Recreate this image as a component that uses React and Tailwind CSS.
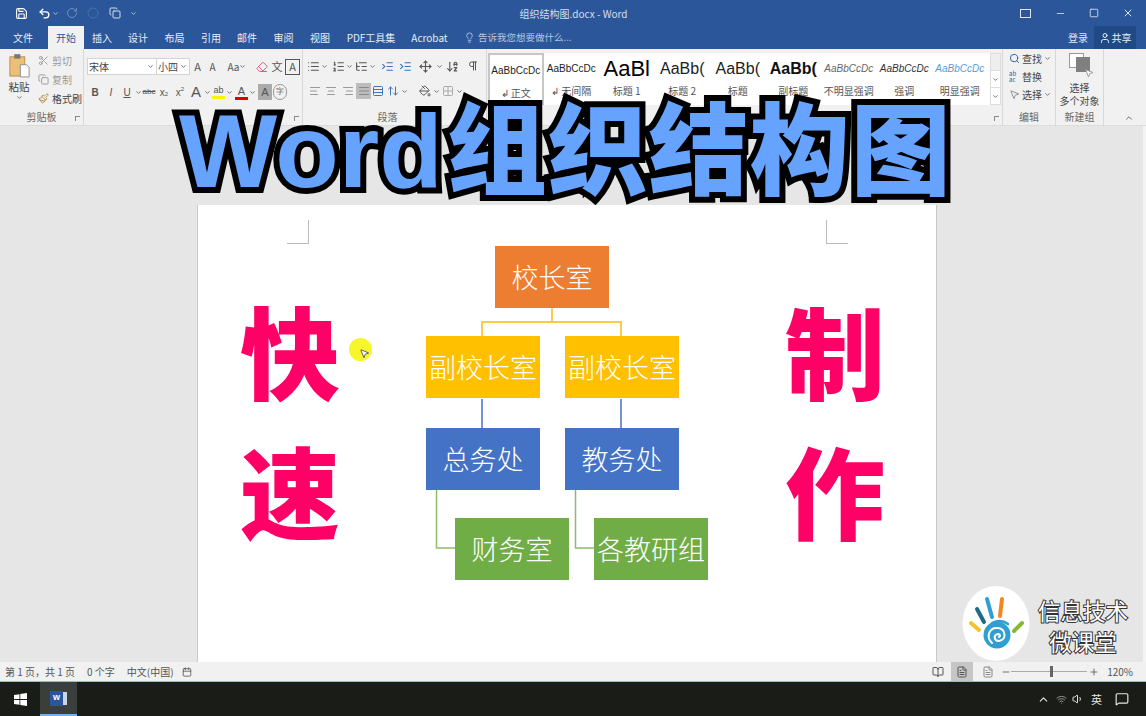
import {
  Save, Undo2, RotateCw, Circle, ChevronDown, ChevronUp, Minus, Square, X, User, Lightbulb, Search, MousePointer2,
  Scissors, Copy, Paintbrush, List, ListOrdered, ListTree, AlignLeft, AlignCenter, AlignRight, AlignJustify, Rows3,
  ArrowUpDown, PaintBucket, Grid2x2, ArrowDownAZ, Pilcrow, Eraser, BookOpen, FileText, Calendar, Plus, Wifi, Volume1, MessageSquare, IndentIncrease, Move,
} from 'lucide-react'

const CJK = "font-['Noto_Sans_CJK_SC','Liberation_Sans',sans-serif]"

const TABS = [
  { label: '插入', w: 'w-[36px]' },
  { label: '设计', w: 'w-[36px]' },
  { label: '布局', w: 'w-[37px]' },
  { label: '引用', w: 'w-[36px]' },
  { label: '邮件', w: 'w-[36px]' },
  { label: '审阅', w: 'w-[37px]' },
  { label: '视图', w: 'w-[36px]' },
  { label: 'PDF工具集', w: 'w-[66px]' },
  { label: 'Acrobat', w: 'w-[51px]' },
]

const STYLES = [
  { preview: 'AaBbCcDc', label: '↲ 正文', cls: 'text-[10px] text-[#222]', active: true },
  { preview: 'AaBbCcDc', label: '↲ 无间隔', cls: 'text-[10px] text-[#222]' },
  { preview: 'AaBl', label: '标题 1', cls: 'text-[22px] font-medium text-black' },
  { preview: 'AaBb(', label: '标题 2', cls: 'text-[16px] text-[#222]' },
  { preview: 'AaBb(', label: '标题', cls: 'text-[16px] text-[#222]' },
  { preview: 'AaBb(', label: '副标题', cls: 'text-[16px] font-semibold text-[#111]' },
  { preview: 'AaBbCcDc', label: '不明显强调', cls: 'text-[10px] italic text-[#666]' },
  { preview: 'AaBbCcDc', label: '强调', cls: 'text-[10px] italic text-[#333]' },
  { preview: 'AaBbCcDc', label: '明显强调', cls: 'text-[10px] italic text-[#5b9bd5]' },
]

// small fixed-width cell that centres one ribbon control
function Cell({ w = 'w-4', children, className = '' }) {
  return <div className={`${w} h-4 flex items-center justify-center shrink-0 text-[#555] ${className}`}>{children}</div>
}

function Caret() {
  return <ChevronDown size={7} strokeWidth={3} className="text-[#666] shrink-0" />
}

function Group({ w, label, labelPad = '', launcher, children, pad = '' }) {
  return (
    <div className={`${w} relative h-full shrink-0 flex flex-col border-r border-[#d8d8d8]`}>
      <div className={`flex-1 min-h-0 ${pad}`}>{children}</div>
      {label && <div className={`h-[17px] shrink-0 text-center text-[10px] leading-[17px] text-[#666] ${labelPad}`}>{label}</div>}
      {launcher && <div className="absolute right-[3px] bottom-[4px] w-[5px] h-[5px] border-t border-l border-[#888]" />}
    </div>
  )
}

function Clipboard() {
  return (
    <Group w="w-[84px]" label="剪贴板" launcher>
      <div className="flex">
        <div className="w-[38px] shrink-0 flex flex-col items-center pt-[4px]">
          <svg width="21" height="26" viewBox="0 0 24 29">
            <rect x="1" y="4" width="17" height="22" fill="#e8c078" stroke="#b58a45" />
            <rect x="6" y="1" width="7" height="5" fill="#777" />
            <path d="M13 13h7l3 3v11H13z" fill="#fff" stroke="#888" />
          </svg>
          <div className="text-[10.5px] leading-[14px] text-[#444] mt-[1px]">粘贴</div>
          <Caret />
        </div>
        <div className="flex flex-col pt-[3px] gap-[2px] text-[10px] leading-[17px] text-[#999]">
          <div className="flex items-center gap-[3px]"><Scissors size={11} />剪切</div>
          <div className="flex items-center gap-[3px]"><Copy size={11} />复制</div>
          <div className="flex items-center gap-[3px] text-[#444]"><Paintbrush size={11} className="text-[#b58a45]" />格式刷</div>
        </div>
      </div>
    </Group>
  )
}

function FontGroup() {
  return (
    <Group w="w-[219px]" label="" launcher>
      <div className="pl-[3px] pt-[9px] flex items-center">
        <div className="w-[70px] h-[17px] bg-white border border-[#d4d4d4] flex items-center justify-between pl-[1px] pr-[2px] text-[10px] text-[#444]">宋体<Caret /></div>
        <div className="w-[33px] h-[17px] bg-white border border-[#d4d4d4] border-l-0 flex items-center justify-between pl-[1px] pr-[2px] text-[10px] text-[#444]">小四<Caret /></div>
        <Cell w="w-[15px]" className="text-[11px]">A</Cell>
        <Cell w="w-[15px]" className="text-[10px]">A</Cell>
        <Cell w="w-[26px]" className="ml-[4px] text-[10px]">Aa<Caret /></Cell>
        <Cell w="w-[15px]" className="ml-[4px]"><Eraser size={12} className="text-[#d9607a]" /></Cell>
        <Cell w="w-[16px]" className="text-[11px] text-[#3a76b8]">文</Cell>
        <Cell w="w-[15px]" className="border border-[#555] text-[11px]">A</Cell>
      </div>
      <div className="pl-[3px] pt-[9px] flex items-center font-['Liberation_Sans',sans-serif]">
        <Cell className="font-bold text-[10px]">B</Cell>
        <Cell className="italic text-[10px]">I</Cell>
        <Cell className="underline text-[10px]">U</Cell>
        <Caret />
        <Cell w="w-[14px]" className="text-[8px] line-through">abc</Cell>
        <Cell className="text-[10px]">x<sub className="text-[6px]">2</sub></Cell>
        <Cell className="text-[10px]">x<sup className="text-[6px]">2</sup></Cell>
        <Cell className="text-[15px] text-[#5b9bd5]">A</Cell>
        <Caret />
        <div className="w-[15px] h-[15px] flex flex-col items-center shrink-0">
          <span className="text-[9px] leading-[11px] text-[#555]">ab</span>
          <span className="w-[13px] h-[3px] bg-[#fff200]" />
        </div>
        <Caret />
        <div className="w-[15px] h-[15px] ml-[1px] flex flex-col items-center shrink-0">
          <span className="text-[11px] leading-[12px] text-[#555]">A</span>
          <span className="w-[13px] h-[3px] bg-[#e00000]" />
        </div>
        <Caret />
        <Cell w="w-[14px]" className="ml-[2px] bg-[#aaa] text-[11px] text-[#333]">A</Cell>
        <Cell w="w-[14px]" className="ml-[1px] rounded-full border border-[#999] text-[8px]">字</Cell>
      </div>
    </Group>
  )
}

function ParagraphGroup() {
  return (
    <Group w="w-[184px]" label="段落" labelPad="pr-[14px]" launcher>
      <div className="pl-[2px] pt-[9px] flex items-center text-[#555]">
        <Cell><List size={13} /></Cell><Caret />
        <Cell className="ml-[2px]"><ListOrdered size={13} /></Cell><Caret />
        <Cell><ListTree size={13} /></Cell><Caret />
        <Cell w="w-[18px]" className="ml-[2px]"><IndentIncrease size={13} className="text-[#3a76b8]" /></Cell>
        <Cell w="w-[18px]"><IndentIncrease size={13} className="text-[#3a76b8]" /></Cell>
        <Cell w="w-[22px]"><Move size={13} /></Cell><Caret />
        <Cell w="w-[18px]"><ArrowDownAZ size={13} /></Cell>
        <Cell w="w-[18px]" className="ml-[3px]"><Pilcrow size={12} /></Cell>
      </div>
      <div className="pl-[3px] pt-[9px] flex items-center">
        <Cell w="w-[17px]"><AlignLeft size={12} className="text-[#999]" /></Cell>
        <Cell w="w-[16px]"><AlignCenter size={12} className="text-[#999]" /></Cell>
        <Cell w="w-[17px]"><AlignRight size={12} className="text-[#999]" /></Cell>
        <Cell w="w-[15px]" className="bg-[#bdbdbd]"><AlignJustify size={12} className="text-[#888]" /></Cell>
        <Cell w="w-[14px]"><Rows3 size={12} className="text-[#3a76b8]" /></Cell>
        <Cell w="w-[16px]"><ArrowUpDown size={12} className="text-[#3a76b8]" /></Cell><Caret />
        <div className="w-[9px] shrink-0" />
        <Cell><PaintBucket size={12} /></Cell><Caret />
        <Cell><Grid2x2 size={12} className="text-[#aaa]" /></Cell><Caret />
      </div>
    </Group>
  )
}

function StylesGroup() {
  return (
    <Group w="w-[516px]" label="" launcher>
      <div className="flex pt-[4px] pl-[1px]">
        <div className="w-[502px] h-[52px] bg-white flex">
          {STYLES.map((s, i) => (
            <div key={i} className={`w-[55.5px] h-[52px] shrink-0 flex flex-col items-center overflow-hidden ${s.active ? 'border-2 border-[#c6c6c6]' : ''}`}>
              <div className={`h-[31px] flex items-center whitespace-nowrap font-['Liberation_Sans',sans-serif] ${s.cls}`}>{s.preview}</div>
              <div className="text-[10px] leading-[14px] text-[#555] whitespace-nowrap">{s.label}</div>
            </div>
          ))}
        </div>
        <div className="w-[11px] h-[52px] flex flex-col border border-[#ddd] bg-white">
          <div className="flex-1 bg-[#eee]" />
          <div className="flex-1 flex items-center justify-center border-t border-[#ddd]"><Caret /></div>
          <div className="flex-1 flex items-center justify-center border-t border-[#ddd]"><Caret /></div>
        </div>
      </div>
    </Group>
  )
}

function EditGroup() {
  return (
    <Group w="w-[53px]" label="编辑" pad="pl-[6px] pt-[1px]">
      <div className="flex flex-col gap-[1px] text-[10px] leading-[17px] text-[#444]">
        <div className="flex items-center gap-[2px]"><Search size={11} className="text-[#2b579a]" />查找<Caret /></div>
        <div className="flex items-center gap-[2px]"><span className="w-[11px] text-[6px] leading-[6px] text-[#2b579a]">ab ac</span>替换</div>
        <div className="flex items-center gap-[2px]"><MousePointer2 size={11} className="text-[#888]" />选择<Caret /></div>
      </div>
    </Group>
  )
}

function NewGroup() {
  return (
    <Group w="w-[48px]" label="新建组">
      <div className="flex flex-col items-center pt-[4px]">
        <div className="relative w-[22px] h-[25px]">
          <div className="w-[15px] h-[15px] border border-[#999] bg-white" />
          <div className="absolute right-[1px] top-[4px] w-[14px] h-[15px] bg-[#808080]" />
          <MousePointer2 size={10} className="absolute right-[-3px] bottom-0 text-[#888] fill-white" />
        </div>
        <div className="text-[10px] leading-[13px] text-[#444] text-center mt-[3px]">选择<br />多个对象</div>
      </div>
    </Group>
  )
}

function Box({ text, bg, pos }) {
  return (
    <div className={`absolute w-[114px] h-[62px] flex items-center justify-center text-white text-[27px] font-light whitespace-nowrap ${bg} ${pos}`}>
      {text}
    </div>
  )
}

function OrgChart() {
  return (
    <div className="relative w-[281px] h-[334px] ml-[88px] shrink-0">
      <svg className="absolute inset-0" width="281" height="334" fill="none">
        <path d="M126 62V76M56 90V76H195V90" stroke="#ffc94a" strokeWidth="2" />
        <path d="M56 153V182M195 153V182" stroke="#4472c4" strokeWidth="1.5" />
        <path d="M10.5 244V302H29M149.5 244V302H168" stroke="#8dbd6c" strokeWidth="1.5" />
      </svg>
      <Box text="校长室" bg="bg-[#ed7d31]" pos="left-[69px] top-0" />
      <Box text="副校长室" bg="bg-[#ffc000]" pos="left-0 top-[90px]" />
      <Box text="副校长室" bg="bg-[#ffc000]" pos="left-[139px] top-[90px]" />
      <Box text="总务处" bg="bg-[#4472c4]" pos="left-0 top-[182px]" />
      <Box text="教务处" bg="bg-[#4472c4]" pos="left-[139px] top-[182px]" />
      <Box text="财务室" bg="bg-[#70ad47]" pos="left-[29px] top-[272px]" />
      <Box text="各教研组" bg="bg-[#70ad47]" pos="left-[168px] top-[272px]" />
    </div>
  )
}

function BigChars({ chars, className }) {
  return (
    <div className={`flex flex-col gap-[22px] text-[#ff0066] text-[100px] leading-[118px] font-black shrink-0 ${className}`}>
      {chars.map(c => <span key={c}>{c}</span>)}
    </div>
  )
}

function HandLogo() {
  return (
    <svg width="68" height="76" viewBox="0 0 68 76" className="absolute left-[962px] top-[586px]">
      <ellipse cx="34" cy="37.5" rx="33.5" ry="37.5" fill="#fff" />
      <g fill="none" strokeLinecap="round" strokeWidth="4">
        <path d="M9 37L17 44" stroke="#f2c230" />
        <path d="M15 23L22 36" stroke="#1d6b86" />
        <path d="M25 13L30 31" stroke="#2f9fd0" />
        <path d="M40 13L38 30" stroke="#ee8a1d" />
        <path d="M60 37L52 45" stroke="#8ab833" />
      </g>
      <circle cx="35" cy="49" r="13.5" fill="#2f9fd0" />
      <path d="M30 57C23 50 28 41 36 42C44 43 45 54 37 55C32 55 31 49 36 48C38 48 39 50 37 51" fill="none" stroke="#fff" strokeWidth="2" strokeLinecap="round" />
      <path d="M30 37C36 34 42 35 46 38" fill="none" stroke="#2f9fd0" strokeWidth="2.5" strokeLinecap="round" />
    </svg>
  )
}

export default function App() {
  return (
    <div className={`relative w-[1146px] h-[716px] overflow-hidden flex flex-col bg-[#e6e6e6] ${CJK}`}>
      {/* title bar */}
      <div className="relative h-[26px] shrink-0 bg-[#2b579a] flex items-center pl-[15px] text-white">
        <Save size={13} />
        <Undo2 size={13} strokeWidth={2.5} className="ml-[10px]" />
        <ChevronDown size={7} className="ml-[1px]" />
        <RotateCw size={12} className="ml-[7px] text-[#6f8fbd]" />
        <Circle size={12} className="ml-[9px] text-[#4a70aa]" />
        <Copy size={12} className="ml-[10px] text-[#d5deea]" />
        <ChevronDown size={7} className="ml-[9px]" />
        <div className="flex-1 text-center text-[10px] text-[#d5deea] pr-[36px] pl-[26px]">组织结构图.docx - Word</div>
        <div className="w-[11px] h-[9px] border border-[#dfe6f0] mr-[24px]" />
        <Minus size={11} className="mr-[23px] text-[#c7d3e4]" />
        <Square size={10} className="mr-[23px] text-[#dfe6f0]" />
        <X size={12} className="mr-[12px] text-[#dfe6f0]" />
      </div>
      {/* tabs */}
      <div className="h-[23px] shrink-0 bg-[#2b579a] flex items-stretch text-[10px] text-[#e8edf5]">
        <div className="ml-[5px] w-[36px] flex items-center justify-center">文件</div>
        <div className="ml-[7px] w-[36px] flex items-center justify-center bg-[#f1f1f1] text-[#2b579a]">开始</div>
        {TABS.map(t => <div key={t.label} className={`${t.w} flex items-center justify-center whitespace-nowrap`}>{t.label}</div>)}
        <div className="ml-[9px] flex items-center gap-[3px] text-[#b6c6de] text-[9.5px]"><Lightbulb size={11} />告诉我您想要做什么...</div>
        <div className="flex-1" />
        <div className="flex items-center mr-[6px] text-[#dfe6f0]">登录</div>
        <div className="w-[42px] mr-[10px] bg-[#1f4a86] flex items-center justify-center gap-[1px]"><User size={12} />共享</div>
      </div>
      {/* ribbon */}
      <div className="h-[77px] shrink-0 bg-[#f1f1f1] flex border-b border-[#dcdcdc] relative">
        <Clipboard />
        <FontGroup />
        <ParagraphGroup />
        <StylesGroup />
        <EditGroup />
        <NewGroup />
        <div className="flex-1 flex items-end justify-end pr-[12px] pb-[2px]"><ChevronUp size={10} className="text-[#555]" /></div>
      </div>
      {/* document area */}
      <div className="flex-1 min-h-0 flex overflow-hidden bg-[#e6e6e6]">
        <div className="flex-1 min-w-0 pt-[79px] pl-[197px] overflow-hidden">
          <div className="relative w-[740px] h-[600px] bg-white border-x border-[#c9c9c9] flex pt-[41px] pl-[42px]">
            <div className="absolute left-[89px] top-[15px] w-[22px] h-[24px] border-r border-b border-[#bbb]" />
            <div className="absolute left-[628px] top-[15px] w-[22px] h-[24px] border-l border-b border-[#bbb]" />
            <BigChars chars={['快', '速']} className="w-[98px] pt-[44px]" />
            <OrgChart />
            <BigChars chars={['制', '作']} className="ml-[78px] w-[98px] pt-[44px]" />
          </div>
        </div>
        <div className="w-[3px] shrink-0 bg-[#f4f4f4]" />
      </div>
      {/* status bar */}
      <div className="h-[20px] shrink-0 bg-[#f1f1f1] border-b border-[#9fb6d6] flex items-center pl-[5px] text-[10px] text-[#555]">
        <span>第 1 页，共 1 页</span>
        <span className="ml-[12px]">0 个字</span>
        <span className="ml-[12px]">中文(中国)</span>
        <Calendar size={10} className="ml-[8px]" />
        <div className="flex-1" />
        <BookOpen size={12} />
        <div className="ml-[7px] w-[22px] h-[19px] bg-[#c6c6c6] flex items-center justify-center"><FileText size={12} /></div>
        <FileText size={12} className="ml-[9px] text-[#888]" />
        <Minus size={10} className="ml-[7px]" />
        <div className="relative w-[76px] h-[1px] bg-[#aaa]">
          <div className="absolute left-[39px] top-[-5px] w-[3px] h-[11px] bg-[#666]" />
        </div>
        <Plus size={10} className="ml-[2px]" />
        <span className="ml-[8px] mr-[13px]">120%</span>
      </div>
      {/* taskbar */}
      <div className="h-[34px] shrink-0 bg-[#1a1c17] flex items-stretch text-[#e8e8e8]">
        <div className="w-[40px] flex items-center justify-center">
          <svg width="13" height="13" viewBox="0 0 13 13" fill="#fff"><path d="M0 2l5.5-.8V6H0zM6.3 1.1L13 0v6H6.3zM0 7h5.5v4.8L0 11zM6.3 7H13v6l-6.7-1z" /></svg>
        </div>
        <div className="w-[37px] bg-[#3a3f3c] border-b-2 border-[#6fb3e8] flex items-center justify-center">
          <div className="w-[13px] h-[15px] bg-[#2b579a] flex items-center justify-center text-[9px] font-bold text-white font-['Liberation_Sans',sans-serif]">w</div>
          <div className="w-[4px] h-[13px] bg-[#c9d6ea]" />
        </div>
        <div className="flex-1" />
        <div className="flex items-center mr-[17px]">
          <ChevronUp size={13} />
          <Wifi size={11} className="ml-[6px] text-[#999]" />
          <Volume1 size={12} className="ml-[5px]" />
          <span className="ml-[7px] text-[11px]">英</span>
          <MessageSquare size={14} className="ml-[13px]" />
        </div>
      </div>
      {/* video overlay: title, highlight, logo, caption */}
      <div className="absolute left-[179px] top-[92px] text-[#66a3ff] text-[100px] leading-[118px] font-black whitespace-nowrap [-webkit-text-stroke:12px_#000] [paint-order:stroke_fill] font-['Liberation_Sans','Noto_Sans_CJK_SC',sans-serif]">
        <span className="text-[104px]">Word</span><span className="ml-[4px] tracking-[1px]">组织结构图</span>
      </div>
      <div className="absolute left-[349px] top-[338px] w-[23px] h-[23px] rounded-full bg-[#f7f52c]" />
      <MousePointer2 size={11} className="absolute left-[359px] top-[348px] text-[#555] fill-white" />
      <HandLogo />
      <div className="absolute left-[1037px] top-[595px] w-[92px] text-center text-white text-[22.5px] leading-[31px] [-webkit-text-stroke:2px_#333] [paint-order:stroke_fill]">信息技术<br />微课堂</div>
    </div>
  )
}
